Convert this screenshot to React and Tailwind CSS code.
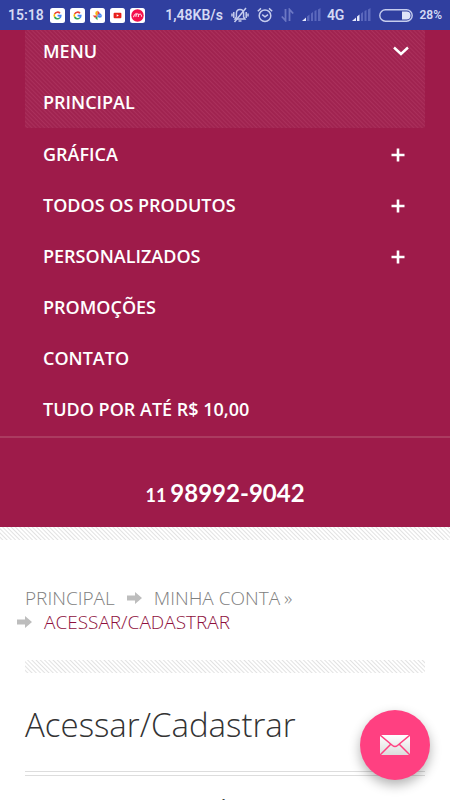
const pinstripes = "bg-[repeating-linear-gradient(45deg,#ffffff_0px,#ffffff_1px,#e2e2e2_2px,#ffffff_3px)]";

const items = [
  { label: "GRÁFICA", more: true },
  { label: "TODOS OS PRODUTOS", more: true },
  { label: "PERSONALIZADOS", more: true },
  { label: "PROMOÇÕES" },
  { label: "CONTATO" },
  { label: "TUDO POR ATÉ R$ 10,00" },
];

function Google() {
  return (
    <svg viewBox="0 0 15 15" className="size-[15px]" aria-hidden="true">
      <rect width="15" height="15" rx="2.5" fill="#fff" />
      <g fill="none" strokeWidth="1.6">
        <path d="M10 5.2A3.3 3.3 0 0 0 4.6 6" stroke="#ea4335" />
        <path d="M4.6 6a3.3 3.3 0 0 0 0 3" stroke="#fbbc05" />
        <path d="M4.6 9a3.3 3.3 0 0 0 5 1" stroke="#34a853" />
        <path d="M9.6 10a3.3 3.3 0 0 0 1.2-2.4H7.6" stroke="#4285f4" />
      </g>
    </svg>
  );
}

function Photos() {
  return (
    <svg viewBox="0 0 15 15" className="size-[15px]" aria-hidden="true">
      <rect width="15" height="15" rx="2.5" fill="#fff" />
      <path d="M7.5 7.5V3a2.2 2.2 0 0 0 0 4.500z" fill="#fbbc05" />
      <path d="M7.500 7.500V2.600l2.600 2.600z" fill="#ea4335" />
      <path d="M7.500 7.500h4.900l-2.500-2.500z" fill="#4285f4" />
      <path d="M7.500 7.500h4.500a2.200 2.200 0 0 1-4.500 0z" fill="#4285f4" />
      <path d="M7.500 7.500v4.700l-2.400-2.300z" fill="#34a853" />
      <path d="M7.500 7.500H2.700l2.400 2.400z" fill="#ea4335" />
    </svg>
  );
}

function Youtube() {
  return (
    <svg viewBox="0 0 15 15" className="size-[15px]" aria-hidden="true">
      <rect width="15" height="15" rx="2.5" fill="#fff" />
      <rect x="3.6" y="4.8" width="7.8" height="5.4" rx="1" fill="#e8201c" />
      <path d="M6.7 6.2v2.6l2.2-1.3z" fill="#fff" />
    </svg>
  );
}

function RedApp() {
  return (
    <svg viewBox="0 0 15 15" className="size-[15px]" aria-hidden="true">
      <rect width="15" height="15" rx="2.5" fill="#fff" />
      <circle cx="7.5" cy="7.5" r="6.2" fill="#f5124d" />
      <path d="M3.6 9.2c.4-2 1.4-3.3 2.7-3.8l-.4 3.4M6.3 7.2c1.2-2 2.6-1.8 2.2 0l-.3 1.8M8.7 7c1.2-1.6 2.8-1.1 2.9 1.6" fill="none" stroke="#fff" strokeWidth="1" />
    </svg>
  );
}

function Muted() {
  return (
    <svg viewBox="0 0 18 16" className="h-4 w-[18px]" fill="none" stroke="#c6cdee" strokeWidth="1.5" aria-hidden="true">
      <path d="M4 12h10L12.600 9.800V6.400C12.600 4 11 2.600 9 2.600S5.400 4 5.400 6.400v3.400zM7.500 14h3" />
      <path d="M15 1L3.500 15M2.800 5v6M1 6.500v3M15.200 5v6M17 6.500v3" />
    </svg>
  );
}

function Alarm() {
  return (
    <svg viewBox="0 0 16 16" className="size-4" fill="none" stroke="#c6cdee" strokeWidth="1.5" aria-hidden="true">
      <circle cx="8" cy="8.7" r="5.8" />
      <path d="M5.200 7.700L8 9.900l3-2.200M.8 4.200L4 1.400M15.200 4.200L12 1.400" />
    </svg>
  );
}

function DataArrows() {
  return (
    <svg viewBox="0 0 13 14" className="h-3.5 w-[13px]" fill="none" stroke="#6c78c4" strokeWidth="1.8" aria-hidden="true">
      <path d="M4.500 1v11.500L.8 8.500M8.500 13V1.500l3.700 4" />
    </svg>
  );
}

function Signal({ strong }) {
  return (
    <svg viewBox="0 0 19 14" className="h-3.5 w-[19px]" aria-hidden="true">
      <path d="M0 13L4 9.500V13z" fill="#e6e9fb" />
      <path d="M5 8.500l2.500-2V13H5z" fill={strong ? "#e6e9fb" : "#5b68bd"} />
      <path d="M9 5.500l2-1.500v9H9zM12.500 3l2-1v11h-2zM16 1.500L18.500 0v13H16z" fill="#5b68bd" />
    </svg>
  );
}

function Battery() {
  return (
    <svg viewBox="0 0 34 13" className="h-[13px] w-[34px]" aria-hidden="true">
      <rect x=".8" y=".8" width="32.4" height="11.4" rx="5.7" fill="none" stroke="#c6cdee" strokeWidth="1.4" />
      <path d="M23 2.500h4.500a4 4 0 0 1 0 8H23z" fill="#e0e4f8" />
    </svg>
  );
}

function CrumbArrow() {
  return (
    <svg viewBox="0 0 15 12" className="h-3 w-[15px] shrink-0" aria-hidden="true">
      <path d="M0 3.500h8V0l7 6-7 6V8.500H0z" fill="#bdbdbd" />
    </svg>
  );
}

function Plus() {
  return (
    <svg viewBox="0 0 14 14" className="size-3.5" aria-hidden="true">
      <path d="M7 .5v13M.5 7h13" stroke="#fff" strokeWidth="2.6" />
    </svg>
  );
}

export default function App() {
  return (
    <div className="flex h-screen flex-col overflow-hidden bg-white font-['Open_Sans',sans-serif]">
      <header className="flex h-[30px] shrink-0 items-center bg-[#303f9f] px-2 font-['Roboto',sans-serif] text-sm font-semibold text-[#d5daf4]">
        <span>15:18</span>
        <div className="ml-1.5 flex gap-[5px]">
          <Google />
          <Google />
          <Photos />
          <Youtube />
          <RedApp />
        </div>
        <span className="ml-auto">1,48KB/s</span>
        <div className="ml-2 flex items-center gap-2">
          <Muted />
          <Alarm />
          <DataArrows />
          <Signal />
        </div>
        <span className="ml-1.5">4G</span>
        <div className="ml-2 flex items-center gap-2">
          <Signal strong />
          <Battery />
        </div>
        <span className="ml-1.5 text-xs">28%</span>
      </header>

      <nav className="shrink-0 border-b-2 border-[#ab3b60] bg-[#9e1b4a] px-[25px] text-lg font-semibold text-white">
        <div className="rounded-b-xs bg-[repeating-linear-gradient(45deg,#a02350_0px,#a02350_1px,#ab305c_2px,#a02350_3px)]">
          <button type="button" className="flex h-[46px] w-full items-center justify-between pr-4 pb-1 pl-[18px]">
            MENU
            <svg viewBox="0 0 16 10" className="h-2.5 w-4" fill="none" stroke="#fff" strokeWidth="2.4" aria-hidden="true">
              <path d="M1 1.500l7 6.500 7-6.500" />
            </svg>
          </button>
          <a href="#principal" className="flex h-[52px] items-center pl-[18px]">PRINCIPAL</a>
        </div>
        <ul className="pb-0.5">
          {items.map((item) => (
            <li key={item.label} className="flex h-[51px] items-center justify-between pr-5 pl-[18px]">
              <a href="#menu">{item.label}</a>
              {item.more && (
                <button type="button" aria-label={"Abrir " + item.label} className="pt-0.5">
                  <Plus />
                </button>
              )}
            </li>
          ))}
        </ul>
      </nav>
      <div className="flex h-[89px] shrink-0 items-center justify-center bg-[#9e1b4a] pt-5 font-['Lato',sans-serif] font-bold text-white">
        <a href="tel:11989929042" className="flex items-baseline gap-1">
          <span className="text-lg">11</span>
          <span className="text-2xl">98992-9042</span>
        </a>
      </div>
      <div className={"h-[13px] shrink-0 " + pinstripes} />

      <main className="px-[25px] pt-[46px]">
        <nav className="text-[19px] leading-6 font-light text-[#808080]">
          <div className="flex items-center">
            <a href="#principal">PRINCIPAL</a>
            <span className="mx-3 flex"><CrumbArrow /></span>
            <a href="#conta">MINHA CONTA</a>
            <span className="ml-1">»</span>
          </div>
          <div className="-ml-2 flex items-center gap-3 text-[#8e0f3c]">
            <CrumbArrow />
            <a href="#acessar">ACESSAR/CADASTRAR</a>
          </div>
        </nav>
        <div className={"mt-[26px] h-[13px] " + pinstripes} />
        <h1 className="mt-7 text-[33px] leading-12 font-light text-[#333333]">Acessar/Cadastrar</h1>
        <div className="mt-[22px] h-[5px] border-y border-[#dddddd]" />
        <p className="mt-4 text-center text-2xl text-[#444444]">Voltar</p>
      </main>

      <button type="button" aria-label="Enviar mensagem" className="fixed right-5 bottom-5 flex size-[70px] items-center justify-center rounded-full bg-[#ff4081] shadow-[0_5px_12px_rgba(0,0,0,0.3)]">
        <svg viewBox="0 0 30 20" className="h-5 w-[30px]" aria-hidden="true">
          <defs>
            <linearGradient id="paper" x1="0" y1="0" x2="0" y2="1">
              <stop offset="0" stopColor="#ffffff" />
              <stop offset="1" stopColor="#dcdcdc" />
            </linearGradient>
          </defs>
          <rect width="30" height="20" rx="1" fill="url(#paper)" />
          <path d="M0 0l12.500 10.500q2.500 2 5 0L30 0M0 20l10.500-10.500M30 20L19.500 9.500" fill="none" stroke="#ff4081" strokeWidth="1.5" />
        </svg>
      </button>
    </div>
  );
}
